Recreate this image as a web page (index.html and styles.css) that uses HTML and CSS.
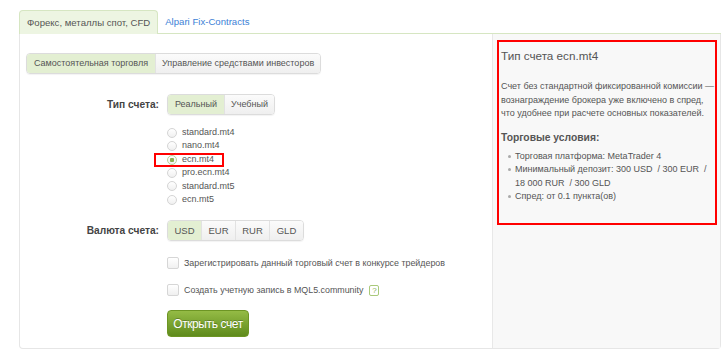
FILE: index.html
```html
<!DOCTYPE html>
<html lang="ru">
<head>
<meta charset="UTF-8">
<title>Открытие счета</title>
<link rel="stylesheet" href="styles.css">
</head>
<body>

<div class="page">
    <div class="tabs">
        <div class="tab active">Форекс, металлы спот, CFD</div>
        <div class="tab link">Alpari Fix-Contracts</div>
        <div class="tab-rest"></div>
    </div>

    <div class="panel">
        <div class="main">
            <div class="switch">
                <span class="switch-item active">Самостоятельная торговля</span>
                <span class="switch-item">Управление средствами инвесторов</span>
            </div>

            <div class="row">
                <div class="label">Тип счета:</div>
                <div class="switch">
                    <span class="switch-item active">Реальный</span>
                    <span class="switch-item">Учебный</span>
                </div>
            </div>

            <ul class="radios">
                <li><span class="radio"></span>standard.mt4</li>
                <li><span class="radio"></span>nano.mt4</li>
                <li class="selected"><span class="radio checked"></span>ecn.mt4<span class="mark"></span></li>
                <li><span class="radio"></span>pro.ecn.mt4</li>
                <li><span class="radio"></span>standard.mt5</li>
                <li><span class="radio"></span>ecn.mt5</li>
            </ul>

            <div class="row currency">
                <div class="label">Валюта счета:</div>
                <div class="switch">
                    <span class="switch-item active">USD</span>
                    <span class="switch-item">EUR</span>
                    <span class="switch-item">RUR</span>
                    <span class="switch-item">GLD</span>
                </div>
            </div>

            <div class="check first"><span class="box"></span>Зарегистрировать данный торговый счет в конкурсе трейдеров</div>
            <div class="check"><span class="box"></span>Создать учетную запись в MQL5.community <span class="help">?</span></div>

            <div class="actions">
                <button class="open-button">Открыть счет</button>
            </div>
        </div>

        <div class="side">
            <div class="info">
                <h3>Тип счета ecn.mt4</h3>
                <p>Счет без стандартной фиксированной комиссии&nbsp;— вознаграждение брокера уже включено в спред, что удобнее при расчете основных показателей.</p>
                <h4>Торговые условия:</h4>
                <ul>
                    <li>Торговая платформа: MetaTrader 4</li>
                    <li>Минимальный депозит: 300 USD &nbsp;/ 300 EUR &nbsp;/ 18&nbsp;000 RUR &nbsp;/ 300 GLD</li>
                    <li>Спред: от 0.1 пункта(ов)</li>
                </ul>
            </div>
        </div>
    </div>
</div>

</body>
</html>
```

FILE: styles.css
```css
body {
    margin: 0;
    background-color: #fff;
    font-family: "Liberation Sans", Arial, sans-serif;
    color: #555;
}
.page {
    padding: 10px 4px 0 19px;
    width: 702px;
}

/* top tabs */
.tabs {
    display: flex;
    height: 24px;
}
.tab {
    font-size: 9.6px;
    line-height: 23px;
    padding: 0 7px;
    white-space: nowrap;
}
.tab.active {
    background-color: #edf5e2;
    border: 1px solid #d6e6c2;
    border-bottom: none;
    border-radius: 4px 4px 0 0;
    color: #555;
}
.tab.link {
    color: #3d7fd6;
    border-bottom: 1px solid #d6e6c2;
}
.tab-rest {
    flex: 1;
    border-bottom: 1px solid #d6e6c2;
}

/* panel */
.panel {
    display: flex;
    border: 1px solid #e6e6e6;
    border-top: none;
    border-radius: 0 0 4px 4px;
    height: 314px;
}
.main {
    width: 472px;
    padding: 18px 0 0 6px;
    box-sizing: border-box;
}
.side {
    flex: 1;
    background-color: #f8f8f8;
    border-left: 1px solid #e8e8e8;
    padding: 6px 3px 0 4px;
}

/* segmented switches */
.switch {
    display: inline-flex;
    border: 1px solid #dcdcdc;
    border-radius: 4px;
    overflow: hidden;
    height: 19px;
    box-shadow: 0 1px 1px rgba(0, 0, 0, 0.05);
}
.switch-item {
    font-size: 9px;
    line-height: 19px;
    padding: 0 6px;
    color: #555;
    background: linear-gradient(#fbfbfb, #efefef);
    border-left: 1px solid #e2e2e2;
    white-space: nowrap;
}
.switch-item:first-child {
    border-left: none;
    padding: 0 7px;
}
.switch-item.active {
    background: #e3efd2;
}

.row {
    display: flex;
    align-items: center;
    margin: 20px 0 0 -6px;
}
.label {
    width: 139px;
    text-align: right;
    margin-right: 8px;
    font-size: 10.2px;
    font-weight: bold;
    color: #444;
}
.currency {
    margin-top: 14px;
}
.currency .switch-item {
    width: 33px;
    padding: 0;
    font-size: 9.5px;
    text-align: center;
}

/* radios */
.radios {
    list-style: none;
    margin: 11px 0 0 141px;
    padding: 0;
}
.radios li {
    position: relative;
    display: flex;
    align-items: center;
    font-size: 9px;
    line-height: 13.4px;
    color: #555;
}
.radio {
    width: 8px;
    height: 8px;
    border: 1px solid #d4d4d4;
    border-radius: 50%;
    background: linear-gradient(#fff, #f0f0f0);
    margin-right: 5px;
    position: relative;
}
.radio.checked {
    border-color: #b9d397;
}
.radio.checked::after {
    content: "";
    position: absolute;
    left: 2px;
    top: 2px;
    width: 4px;
    height: 4px;
    border-radius: 1px;
    background-color: #8cb153;
}
.mark {
    position: absolute;
    left: -13px;
    top: 0;
    width: 66px;
    height: 10px;
    border: 2px solid #f00;
}

/* checkboxes */
.check {
    display: flex;
    align-items: center;
    margin: 13px 0 0 141px;
    font-size: 8.9px;
    line-height: 14px;
    color: #555;
}
.check.first {
    margin-top: 15px;
}
.box {
    width: 10px;
    height: 10px;
    border: 1px solid #d6d6d6;
    border-radius: 2px;
    background: linear-gradient(#fff, #f0f0f0);
    margin-right: 5px;
}
.help {
    display: inline-block;
    width: 8px;
    height: 9px;
    margin-left: 6px;
    border: 1px solid #a9c97a;
    border-radius: 2px;
    color: #8cb153;
    font-size: 8px;
    line-height: 9px;
    text-align: center;
}

.actions {
    margin: 13px 0 0 141px;
}
.open-button {
    font-family: "Liberation Sans", Arial, sans-serif;
    font-size: 12px;
    letter-spacing: -0.4px;
    white-space: nowrap;
    color: #fff;
    height: 27px;
    width: 82px;
    padding: 0;
    border: 1px solid #6d9524;
    border-radius: 4px;
    background: linear-gradient(#94bb45, #5f8b1c);
    text-shadow: 0 -1px 0 rgba(0, 0, 0, 0.25);
}

/* info box */
.info {
    border: 2px solid #f00;
    height: 185px;
    box-sizing: border-box;
    padding: 5px 0 0 2px;
}
.info h3 {
    margin: 0;
    font-size: 11.7px;
    font-weight: normal;
    color: #555;
    line-height: 18px;
}
.info p {
    margin: 15px 0 0;
    font-size: 9px;
    line-height: 13.5px;
    color: #555;
}
.info h4 {
    margin: 10px 0 0;
    font-size: 10.3px;
    line-height: 13px;
    color: #555;
}
.info ul {
    list-style: none;
    margin: 6px 0 0;
    padding: 0 0 0 14px;
}
.info li {
    position: relative;
    font-size: 9px;
    line-height: 13.5px;
    color: #555;
}
.info li::before {
    content: "";
    position: absolute;
    left: -7px;
    top: 5px;
    width: 3px;
    height: 3px;
    border-radius: 50%;
    background-color: #aaa;
}
```
